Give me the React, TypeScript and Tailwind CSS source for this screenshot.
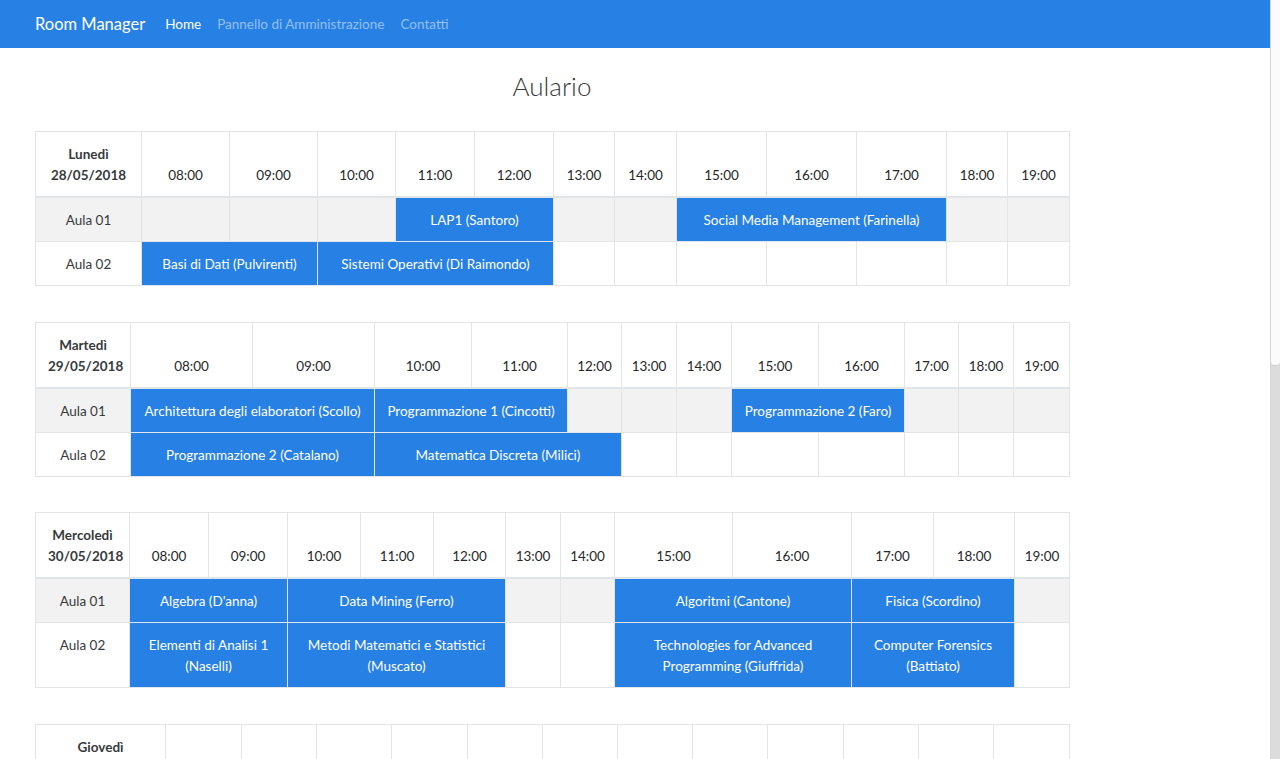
import React from "react";

type Cell = { span: number; lines?: string[] };
type Day = {
  name: string;
  date: string;
  widths: number[];
  rows: { label: string; cells: Cell[] }[];
};

const HOURS = ["08:00", "09:00", "10:00", "11:00", "12:00", "13:00", "14:00", "15:00", "16:00", "17:00", "18:00", "19:00"];

const e = (n: number): Cell[] => Array.from({ length: n }, () => ({ span: 1 }));
const L = (span: number, ...lines: string[]): Cell => ({ span, lines });

const DAYS: Day[] = [
  {
    name: "Lunedì",
    date: "28/05/2018",
    widths: [106, 88, 88, 78, 79, 79, 61, 62, 90, 90, 90, 61, 62],
    rows: [
      { label: "Aula 01", cells: [...e(3), L(2, "LAP1 (Santoro)"), ...e(2), L(3, "Social Media Management (Farinella)"), ...e(2)] },
      { label: "Aula 02", cells: [L(2, "Basi di Dati (Pulvirenti)"), L(3, "Sistemi Operativi (Di Raimondo)"), ...e(7)] },
    ],
  },
  {
    name: "Martedì",
    date: "29/05/2018",
    widths: [95, 122, 122, 97, 96, 54, 55, 55, 87, 86, 54, 55, 56],
    rows: [
      {
        label: "Aula 01",
        cells: [L(2, "Architettura degli elaboratori (Scollo)"), L(2, "Programmazione 1 (Cincotti)"), ...e(3), L(2, "Programmazione 2 (Faro)"), ...e(3)],
      },
      { label: "Aula 02", cells: [L(2, "Programmazione 2 (Catalano)"), L(3, "Matematica Discreta (Milici)"), ...e(7)] },
    ],
  },
  {
    name: "Mercoledì",
    date: "30/05/2018",
    widths: [94, 79, 79, 73, 73, 72, 55, 54, 118, 119, 82, 81, 55],
    rows: [
      {
        label: "Aula 01",
        cells: [L(2, "Algebra (D'anna)"), L(3, "Data Mining (Ferro)"), ...e(2), L(2, "Algoritmi (Cantone)"), L(2, "Fisica (Scordino)"), ...e(1)],
      },
      {
        label: "Aula 02",
        cells: [
          L(2, "Elementi di Analisi 1", "(Naselli)"),
          L(3, "Metodi Matematici e Statistici", "(Muscato)"),
          ...e(2),
          L(2, "Technologies for Advanced", "Programming (Giuffrida)"),
          L(2, "Computer Forensics", "(Battiato)"),
          ...e(1),
        ],
      },
    ],
  },
  {
    name: "Giovedì",
    date: "31/05/2018",
    widths: [130, 76, 75, 75, 76, 75, 75, 75, 75, 76, 75, 75, 76],
    rows: [
      { label: "Aula 01", cells: e(12) },
      { label: "Aula 02", cells: e(12) },
    ],
  },
  {
    name: "Venerdì",
    date: "01/06/2018",
    widths: [130, 76, 75, 75, 76, 75, 75, 75, 75, 76, 75, 75, 76],
    rows: [
      { label: "Aula 01", cells: e(12) },
      { label: "Aula 02", cells: e(12) },
    ],
  },
];

function DayTable({ day }: { day: Day }) {
  return (
    <table className="w-[1034px] table-fixed border-collapse border border-[#e2e5e8] mb-[35.5px]">
      <colgroup>
        {day.widths.map((w, i) => (
          <col key={i} style={{ width: w }} />
        ))}
      </colgroup>
      <thead>
        <tr>
          <th className="border border-[#e2e5e8] border-b-2 px-[12px] pt-[12px] pb-[10px] align-bottom text-center font-bold leading-[21px] text-[#373a3c]">
            {day.name}
            <br />
            {day.date}
          </th>
          {HOURS.map((h) => (
            <th
              key={h}
              className="border border-[#e2e5e8] border-b-2 px-[4px] pt-[12px] pb-[10px] align-bottom text-center font-normal leading-[21px] text-[#26282a]"
            >
              {h}
            </th>
          ))}
        </tr>
      </thead>
      <tbody>
        {day.rows.map((row, ri) => (
          <tr key={ri} className={ri % 2 === 0 ? "bg-[#f2f2f2]" : "bg-white"}>
            <td className="border border-[#e2e5e8] px-[12px] pt-[12px] pb-[10px] align-top text-center leading-[21px] text-[#373a3c]">
              {row.label}
            </td>
            {row.cells.map((c, ci) =>
              c.lines ? (
                <td
                  key={ci}
                  colSpan={c.span}
                  className="border border-[#e2e5e8] bg-[#2780e3] px-[6px] pt-[12px] pb-[10px] align-top text-center leading-[21px] text-white whitespace-nowrap"
                >
                  {c.lines.map((l, li) => (
                    <div key={li}>{l}</div>
                  ))}
                </td>
              ) : (
                <td key={ci} colSpan={c.span} className="border border-[#e2e5e8] px-[12px] pt-[12px] pb-[10px] leading-[21px]">
                  &nbsp;
                </td>
              )
            )}
          </tr>
        ))}
      </tbody>
    </table>
  );
}

export default function App() {
  return (
    <div className="flex h-[759px] w-[1280px] overflow-hidden bg-white font-['Lato','Noto_Sans',sans-serif] text-[13.5px] text-[#373a3c]">
      <div className="flex min-w-0 flex-1 flex-col">
        <nav className="flex h-12 shrink-0 items-center bg-[#2780e3] px-[35px]">
          <span className="mr-[12px] text-[16.5px] text-white">Room Manager</span>
          <div className="flex items-center">
            <span className="px-[8px] text-[13.5px] text-white">Home</span>
            <span className="px-[8px] text-[13.5px] text-white/50">Pannello di Amministrazione</span>
            <span className="px-[8px] text-[13.5px] text-white/50">Contatti</span>
          </div>
        </nav>
        <main className="px-[35px]">
          <div className="w-[1034px]">
            <h1 className="mt-[23px] mb-[29px] text-center text-[26px] font-light leading-[31px] text-[#373a3c]">Aulario</h1>
            {DAYS.map((d) => (
              <DayTable key={d.name} day={d} />
            ))}
          </div>
        </main>
      </div>
      <div className="flex w-[10px] shrink-0 flex-col border-l border-[#d6d6d6] bg-[#dcdcdc]">
        <div className="h-[366px] rounded-b-[4px] border-b border-[#cfcfcf] bg-[#fbfbfb]" />
        <div className="flex-1" />
      </div>
    </div>
  );
}
